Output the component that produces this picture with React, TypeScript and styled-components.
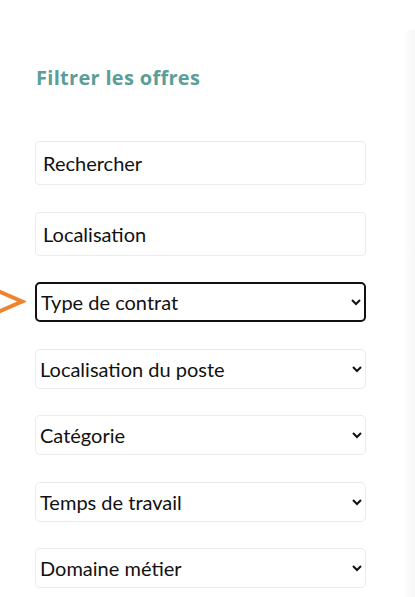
import React from "react";
import styled, { createGlobalStyle } from "styled-components";

const GlobalStyle = createGlobalStyle`
  html, body {
    margin: 0;
    padding: 0;
    background: #ffffff;
  }
  body {
    font-family: "Lato", "Liberation Sans", sans-serif;
  }
`;

const Page = styled.div`
  display: flex;
  width: 415px;
  height: 597px;
  overflow: hidden;
  background: #ffffff;
`;

const Sidebar = styled.aside`
  position: relative;
  flex: 1;
  padding: 65px 0 0 35px;
`;

const Edge = styled.div`
  width: 12px;
  margin-top: 30px;
  background: linear-gradient(to right, rgba(0, 0, 0, 0), rgba(0, 0, 0, 0.03));
`;

const Title = styled.h2`
  margin: 0 0 50px 1px;
  font-family: "Open Sans", "DejaVu Sans", sans-serif;
  font-weight: 700;
  font-size: 20px;
  line-height: 26px;
  letter-spacing: 0.3px;
  color: #5b9e97;
`;

const Form = styled.form`
  display: flex;
  flex-direction: column;
  width: 331px;
`;

const TextField = styled.input<{ $gap: number }>`
  box-sizing: border-box;
  width: 100%;
  height: 44px;
  margin-bottom: ${(p) => p.$gap}px;
  padding: 0 7px;
  border: 1px solid #ebebeb;
  border-radius: 4px;
  background: #ffffff;
  font-family: "Lato", "Liberation Sans", sans-serif;
  font-size: 20px;
  color: #111111;
  outline: none;
  &::placeholder {
    color: #111111;
    opacity: 1;
  }
`;

const SelectField = styled.select<{ $focused?: boolean }>`
  box-sizing: border-box;
  width: 100%;
  height: 40px;
  margin-bottom: 26.5px;
  padding: 0;
  border: ${(p) => (p.$focused ? "2px solid #111111" : "1px solid #ebebeb")};
  border-radius: 5px;
  background: #ffffff;
  font-family: "Lato", "Liberation Sans", sans-serif;
  font-size: 20px;
  color: #111111;
  outline: none;
`;

const Pointer = styled.svg`
  position: absolute;
  left: 0;
  top: 289px;
`;

const selects = [
  "Type de contrat",
  "Localisation du poste",
  "Catégorie",
  "Temps de travail",
  "Domaine métier",
];

export default function App() {
  return (
    <Page>
      <GlobalStyle />
      <Sidebar>
        <Pointer width="26" height="26" viewBox="0 0 26 26">
          <path
            d="M-2 2 L22 12.5 L-2 23"
            fill="none"
            stroke="#f0832c"
            strokeWidth="4"
            strokeLinejoin="miter"
          />
        </Pointer>
        <Title>Filtrer les offres</Title>
        <Form onSubmit={(e) => e.preventDefault()}>
          <TextField $gap={27} placeholder="Rechercher" />
          <TextField $gap={26} placeholder="Localisation" />
          {selects.map((label, i) => (
            <SelectField key={label} $focused={i === 0} defaultValue="">
              <option value="">{label}</option>
            </SelectField>
          ))}
        </Form>
      </Sidebar>
      <Edge />
    </Page>
  );
}
